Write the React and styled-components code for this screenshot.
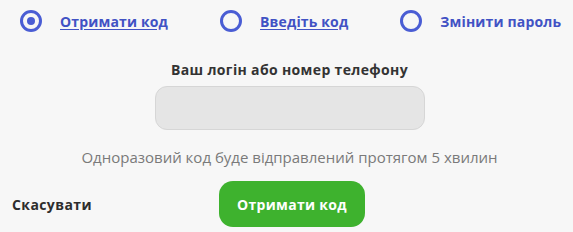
import React, { useState } from 'react'
import styled, { createGlobalStyle } from 'styled-components'

const GlobalStyle = createGlobalStyle`
  html, body {
    margin: 0;
    padding: 0;
    background: #f7f7f7;
  }
  body {
    font-family: "Open Sans", "Liberation Sans", sans-serif;
  }
`

const Page = styled.div`
  width: 573px;
  height: 232px;
  background: #f7f7f7;
  box-sizing: border-box;
  padding-top: 10px;
  overflow: hidden;
`

const Tabs = styled.div`
  display: flex;
  align-items: center;
  gap: 52px;
  padding-left: 20px;
  height: 22px;
`

const Tab = styled.label`
  display: flex;
  align-items: center;
  gap: 18px;
  cursor: pointer;
`

const Radio = styled.span`
  width: 22px;
  height: 22px;
  box-sizing: border-box;
  border-radius: 50%;
  border: 3.5px solid #4a5dd4;
  display: flex;
  align-items: center;
  justify-content: center;

  &::after {
    content: '';
    width: 8px;
    height: 8px;
    border-radius: 50%;
    background: #4a5dd4;
    display: ${(p) => (p.$checked ? 'block' : 'none')};
  }
`

const TabText = styled.span`
  font-size: 14px;
  font-weight: 700;
  color: #4152c4;
  text-decoration: ${(p) => (p.$underline ? 'underline' : 'none')};
  text-underline-offset: 2px;
  letter-spacing: 0.15px;
`

const Main = styled.div`
  display: flex;
  flex-direction: column;
  align-items: center;
  padding-left: 6px;
  margin-top: 29px;
`

const FieldLabel = styled.div`
  font-size: 14px;
  font-weight: 700;
  color: #333;
  line-height: 18px;
  letter-spacing: 0.35px;
`

const Input = styled.input`
  margin-top: 7px;
  width: 270px;
  height: 44px;
  box-sizing: border-box;
  border: 1px solid #d6d6d6;
  border-radius: 12px;
  background: #e5e5e5;
  outline: none;
  font: inherit;
  padding: 0 14px;
`

const Hint = styled.div`
  margin-top: 18px;
  font-size: 15px;
  color: #7a7a7a;
  line-height: 18px;
`

const Footer = styled.div`
  display: grid;
  grid-template-columns: 1fr auto 1fr;
  align-items: center;
  padding-left: 11px;
  margin-top: 15px;
`

const Cancel = styled.button`
  justify-self: start;
  background: none;
  border: none;
  padding: 0 0 0 1px;
  font: inherit;
  font-size: 14px;
  font-weight: 700;
  color: #2d2d2d;
  letter-spacing: 0.4px;
  cursor: pointer;
`

const Submit = styled.button`
  width: 146px;
  height: 46px;
  border: none;
  border-radius: 14px;
  background: #3eb22e;
  color: #fff;
  font: inherit;
  font-size: 14px;
  font-weight: 700;
  letter-spacing: 0.3px;
  cursor: pointer;
`

const tabs = [
  { id: 'get', label: 'Отримати код', underline: true },
  { id: 'enter', label: 'Введіть код', underline: true },
  { id: 'change', label: 'Змінити пароль', underline: false },
]

export default function App() {
  const [active, setActive] = useState('get')

  return (
    <Page>
      <GlobalStyle />
      <Tabs>
        {tabs.map((t) => (
          <Tab key={t.id} onClick={() => setActive(t.id)}>
            <Radio $checked={active === t.id} />
            <TabText $underline={t.underline}>{t.label}</TabText>
          </Tab>
        ))}
      </Tabs>
      <Main>
        <FieldLabel>Ваш логін або номер телефону</FieldLabel>
        <Input type="text" />
        <Hint>Одноразовий код буде відправлений протягом 5 хвилин</Hint>
      </Main>
      <Footer>
        <Cancel>Скасувати</Cancel>
        <Submit>Отримати код</Submit>
      </Footer>
    </Page>
  )
}
